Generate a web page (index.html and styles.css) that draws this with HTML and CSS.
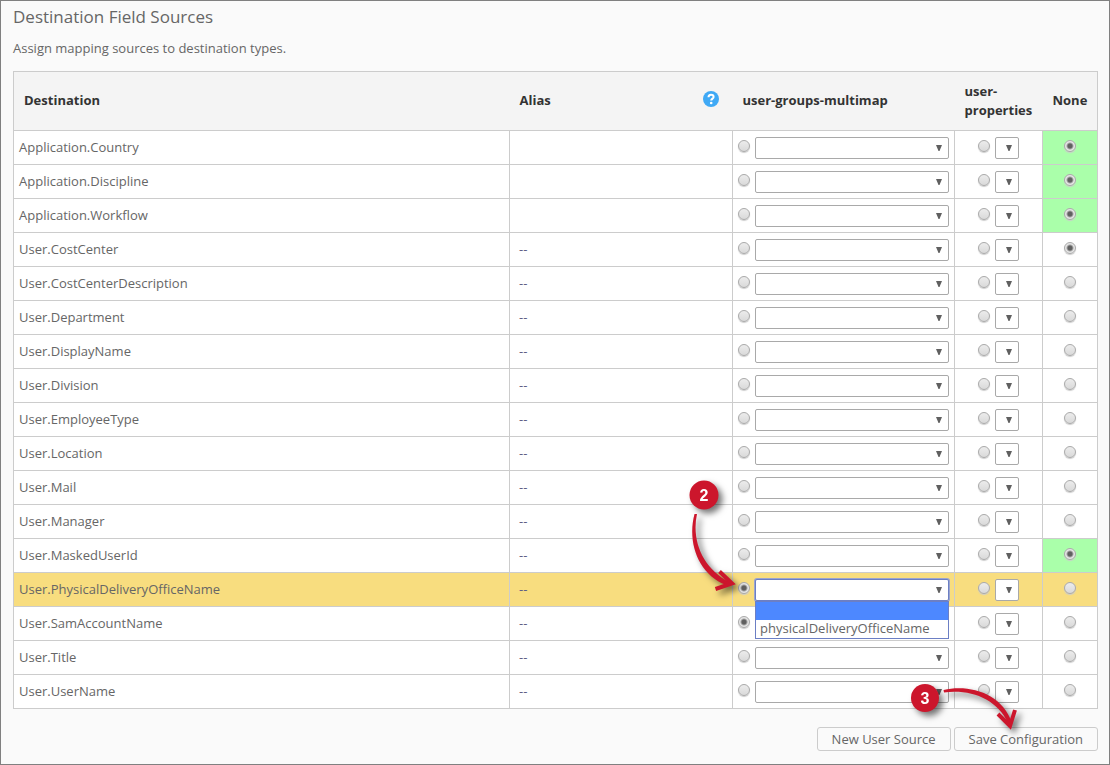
FILE: index.html
```html
<!DOCTYPE html>
<html lang="en">
<head>
<meta charset="utf-8">
<title>Destination Field Sources</title>
<link rel="stylesheet" href="styles.css">
</head>
<body>
<main class="panel">
  <h1 class="title">Destination Field Sources</h1>
  <p class="intro">Assign mapping sources to destination types.</p>
  <form>
    <table class="mapping">
      <colgroup>
        <col><col class="col-alias"><col class="col-groups"><col class="col-props"><col class="col-none">
      </colgroup>
      <thead>
        <tr>
          <th scope="col">Destination</th>
          <th scope="col"><div class="alias-head">Alias
            <button type="button" class="help" aria-label="Help">
              <svg viewBox="0 0 16 16" width="16" height="16" aria-hidden="true"><circle cx="8" cy="8" r="8" fill="#3fa9f5"/><path d="M5.500 6.200C5.500 4.500 6.500 3.700 8 3.700s2.600.9 2.600 2.200C10.600 7.600 8.200 7.700 8.200 9.600" fill="none" stroke="#fff" stroke-width="2"/><circle cx="8.200" cy="12" r="1.300" fill="#fff"/></svg>
            </button></div></th>
          <th scope="col">user-groups-multimap</th>
          <th scope="col">user-properties</th>
          <th scope="col">None</th>
        </tr>
      </thead>
      <tbody id="rows"></tbody>
    </table>
    <div class="actions">
      <button type="button" class="btn">New User Source</button>
      <div class="anchor">
        <button type="submit" class="btn">Save Configuration</button>
        <svg class="callout callout-save" viewBox="0 0 130 70" width="130" height="70" role="img" aria-label="Step 3">
          <circle class="badge" cx="20" cy="20" r="14"/>
          <text class="badge-text" x="20" y="26">3</text>
          <g class="arrow">
            <path d="M38.500 12C64 6 97 15 107 45L103 45C92 21 66 11 39 14.500Z"/>
            <path class="head" d="M93 36L105 48L110 32"/>
          </g>
        </svg>
      </div>
    </div>
  </form>
</main>
<script src="rows.js"></script>
</body>
</html>
```
FILE: rows.js
```js
const fields = [
  { name: 'Application.Country', alias: '', source: 'none', required: true },
  { name: 'Application.Discipline', alias: '', source: 'none', required: true },
  { name: 'Application.Workflow', alias: '', source: 'none', required: true },
  { name: 'User.CostCenter', alias: '--', source: 'none' },
  { name: 'User.CostCenterDescription', alias: '--' },
  { name: 'User.Department', alias: '--' },
  { name: 'User.DisplayName', alias: '--' },
  { name: 'User.Division', alias: '--' },
  { name: 'User.EmployeeType', alias: '--' },
  { name: 'User.Location', alias: '--' },
  { name: 'User.Mail', alias: '--' },
  { name: 'User.Manager', alias: '--' },
  { name: 'User.MaskedUserId', alias: '--', source: 'none', required: true },
  { name: 'User.PhysicalDeliveryOfficeName', alias: '--', source: 'groups', open: true },
  { name: 'User.SamAccountName', alias: '--', source: 'groups' },
  { name: 'User.Title', alias: '--' },
  { name: 'User.UserName', alias: '--' }
];

const openMenu = `
  <ul class="menu" role="listbox" aria-label="Attribute">
    <li class="option selected" role="option" aria-selected="true"></li>
    <li class="option" role="option">physicalDeliveryOfficeName</li>
  </ul>
  <svg class="callout callout-source" viewBox="0 0 70 130" width="70" height="130" role="img" aria-label="Step 2">
    <circle class="badge" cx="20" cy="19" r="14.500"/>
    <text class="badge-text" x="20" y="25">2</text>
    <g class="arrow">
      <path d="M10.500 38L13 38C7 66 20 93 45 106L42 109C14 98 3 66 10.500 38Z"/>
      <path class="head" d="M35.500 95.500L48 107.500L31.500 113"/>
    </g>
  </svg>`;

function radio(field, source) {
  const checked = field.source === source ? ' checked' : '';
  return `<input type="radio" class="radio" name="${field.name}" value="${source}" aria-label="${field.name}: ${source}"${checked}>`;
}

function select(field, source, extra) {
  return `<select class="select ${extra}" aria-label="${field.name} ${source} attribute"><option></option></select>`;
}

document.getElementById('rows').innerHTML = fields.map(field => `
  <tr${field.open ? ' class="current"' : ''}>
    <td>${field.name}</td>
    <td class="alias">${field.alias}</td>
    <td><div class="source">${radio(field, 'groups')}${select(field, 'groups', field.open ? 'wide open' : 'wide')}${field.open ? openMenu : ''}</div></td>
    <td><div class="source">${radio(field, 'properties')}${select(field, 'properties', 'narrow')}</div></td>
    <td${field.required ? ' class="required"' : ''}><div class="source">${radio(field, 'none')}</div></td>
  </tr>`).join('');
```
FILE: styles.css
```css
* { box-sizing: border-box; }

body {
  margin: 0;
  background: #fafafa;
  color: #666;
  font: 13px/19px "Open Sans", sans-serif;
}

.panel {
  min-height: 100vh;
  padding: 6px 11px 12px 12px;
  border: 1px solid #808080;
}

.title {
  margin: 0;
  font-size: 17px;
  line-height: 20px;
  font-weight: 400;
}

.intro { margin: 12px 0 13px; }

.mapping {
  width: 100%;
  table-layout: fixed;
  border-collapse: collapse;
  border: 1px solid #ccc;
  background: #fff;
}

.col-alias { width: 223px; }
.col-groups { width: 222px; }
.col-props { width: 88px; }
.col-none { width: 55px; }

th {
  height: 59px;
  padding: 0 9px 1px 10px;
  background: #f4f4f4;
  color: #333;
  font-weight: 700;
  text-align: left;
}

td {
  height: 34px;
  padding: 0 5px;
  border: 1px solid #ccc;
}

.alias {
  padding-left: 9px;
  color: #5f5f86;
}

.current { background: #f8dd7f; }
.required { background: #afa; }

.alias-head {
  display: flex;
  align-items: center;
  justify-content: space-between;
  padding-right: 5px;
}

.help {
  display: block;
  padding: 0;
  border: 0;
  background: none;
  margin-bottom: 3px;
}

.help svg { display: block; }

.source {
  position: relative;
  display: flex;
  align-items: center;
  justify-content: center;
  gap: 5px;
}

.radio {
  appearance: none;
  flex: none;
  width: 12px;
  height: 12px;
  margin: 0 0 3px;
  border: 1px solid #aaa;
  border-radius: 50%;
  background: linear-gradient(#ececec, #d9d9d9);
  box-shadow: 0 1px 1px #ccc;
}

.radio:checked {
  background: radial-gradient(circle, #606060 2px, #e6e6e6 4px);
}

.select {
  appearance: none;
  height: 22px;
  margin: 0;
  padding: 0 4px;
  border: 1px solid #a9a9a9;
  border-radius: 2px;
  background: #fff url("data:image/svg+xml,%3Csvg xmlns='http://www.w3.org/2000/svg' width='6' height='6'%3E%3Cpath d='M0 0h6L3.5 6h-1z' fill='%23606060'/%3E%3C/svg%3E") no-repeat right 6px center;
  color: #666;
  font: inherit;
}

.wide {
  flex: 1;
  min-width: 0;
}

.narrow { width: 24px; }

.open {
  border-color: #6c7fc4;
  box-shadow: 0 0 0 1px #9aa5cf;
}

.menu {
  position: absolute;
  z-index: 1;
  top: 100%;
  left: 17px;
  right: 0;
  margin: 0;
  padding: 0;
  border: 1px solid #6c7fc4;
  background: #fff;
  list-style: none;
}

.option {
  height: 18px;
  padding: 0 4px;
  line-height: 16px;
}

.selected { background: #4d88ff; }

.actions {
  display: flex;
  justify-content: flex-end;
  gap: 3px;
  margin-top: 18px;
}

.anchor { position: relative; }

.btn {
  height: 24px;
  padding: 0 14px;
  border: 1px solid #ccc;
  border-radius: 3px;
  background: #fafafa;
  color: #666;
  font: inherit;
}

.callout {
  position: absolute;
  z-index: 2;
  overflow: visible;
  pointer-events: none;
  filter: drop-shadow(4px 4px 3px #0008);
}

.callout-source {
  left: -54px;
  top: -103px;
}

.callout-save {
  left: -49px;
  top: -49px;
}

.badge, .arrow { fill: #cc162c; }

.head {
  fill: none;
  stroke: #cc162c;
  stroke-width: 4;
}

.badge-text {
  fill: #fff;
  font: 700 16px "Liberation Sans", Arial, sans-serif;
  text-anchor: middle;
}
```
